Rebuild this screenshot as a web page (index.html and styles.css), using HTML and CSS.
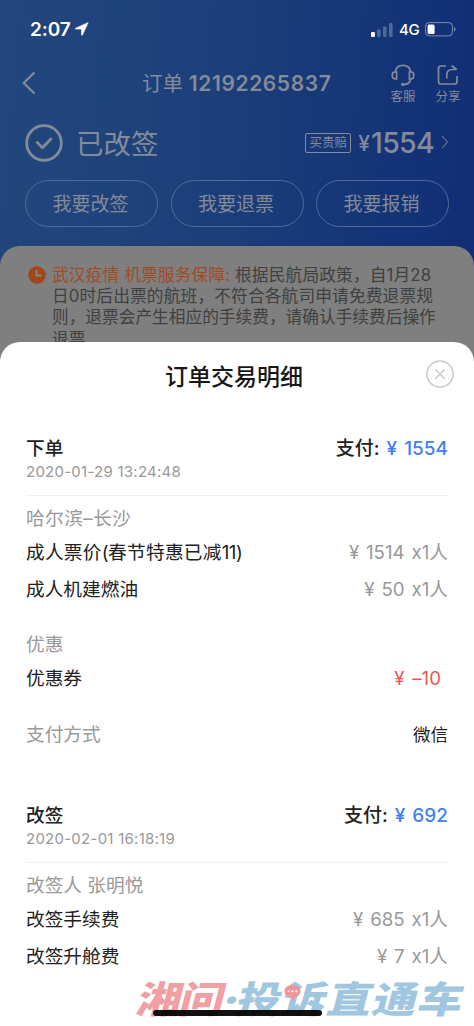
FILE: index.html
```html
<!DOCTYPE html>
<html lang="zh-CN">
<head>
<meta charset="utf-8">
<title>订单交易明细</title>
<link rel="stylesheet" href="styles.css">
</head>
<body>
<div class="phone">
  <header class="hero">
    <div class="status">
      <span class="time">2:07</span>
      <svg class="loc" width="14" height="14" viewBox="0 0 14 14"><path d="M13.200.6.6 6.200c-.6.3-.5.9.2.9h5.700v5.600c0 .7.700.8 1 .2z" fill="#fff" stroke="#fff" stroke-width=".6"/></svg>
      <svg class="signal" width="22" height="14" viewBox="0 0 22 14" fill="#fff"><rect y="9" width="4" height="5" rx="1"/><g opacity=".25"><rect x="6" y="6.500" width="3.600" height="7.500" rx="1"/><rect x="12" y="3.500" width="3.600" height="10.500" rx="1"/><rect x="18" width="3.600" height="14" rx="1"/></g></svg>
      <span class="net">4G</span>
      <svg class="battery" width="31" height="15" viewBox="0 0 31 15"><rect x=".6" y=".6" width="26.800" height="13.300" rx="3.600" fill="none" stroke="#fff" stroke-opacity=".45"/><rect x="2.600" y="2.500" width="7" height="9.500" rx="1.500" fill="#fff"/><path d="M29 5v4.500q1.500-.6 1.500-2.250T29 5" fill="#fff" opacity=".45"/></svg>
    </div>
    <nav class="nav">
      <svg class="back" width="14" height="24" viewBox="0 0 14 24"><path d="M12.500 1.500 1.700 12 12.500 22.500" fill="none" stroke="currentColor" stroke-width="2.200"/></svg>
      <h1 class="order">订单 <b>12192265837</b></h1>
      <div class="tool">
        <svg width="24" height="23" viewBox="0 0 24 23" fill="none" stroke="currentColor" stroke-width="1.700"><path d="M4.300 8C5 3.500 8 1.300 12 1.300S19 3.500 19.700 8M19.700 15c-.8 4-3.200 5.700-7.700 5.500"/><path d="M5.600 8v6.800H4Q1.200 14.800 1.200 11.400T4 8zM18.400 8v6.800H20q2.800 0 2.800-3.400T20 8z"/><path d="M11.500 20.500h1" stroke-width="2.800" stroke-linecap="round"/></svg>
        <span>客服</span>
      </div>
      <div class="tool">
        <svg width="22" height="23" viewBox="0 0 22 23" fill="none" stroke="currentColor" stroke-width="1.700"><path d="M9 2H4Q1.500 2 1.500 4.500v13Q1.500 20 4 20h13.500q2.500 0 2.500-2.500V12M9.800 14.500V11q0-5.500 5.500-5.500h4M14.500 1.500l5.300 4"/></svg>
        <span>分享</span>
      </div>
    </nav>
    <div class="state">
      <svg width="38" height="38" viewBox="0 0 38 38" fill="none" stroke="currentColor" stroke-width="2.800"><circle cx="19" cy="19" r="17.300"/><path d="m12.300 18.500 5.200 5.200 8.300-8.700" stroke-linecap="round" stroke-linejoin="round"/></svg>
      <span class="state-name">已改签</span>
      <span class="tag">买贵赔</span>
      <span class="yen">¥</span><span class="total">1554</span>
      <svg class="more" width="8" height="14" viewBox="0 0 8 14"><path d="m1 1 5.500 6L1 13" fill="none" stroke="currentColor"/></svg>
    </div>
    <div class="actions"><span>我要改签</span><span>我要退票</span><span>我要报销</span></div>
  </header>
  <section class="notice">
    <svg width="18" height="18" viewBox="0 0 18 18"><circle cx="9" cy="9" r="8.800" fill="#9f491b"/><path d="M8.500 4v5.500h5" fill="none" stroke="#8a8583" stroke-width="1.800"/></svg>
    <div class="notice-text">
      <p class="n1"><em>武汉疫情 机票服务保障:</em> 根据民航局政策，自1月28</p>
      <p class="n2">日0时后出票的航班，不符合各航司申请免费退票规</p>
      <p class="n3">则，退票会产生相应的手续费，请确认手续费后操作</p>
      <p>退票</p>
    </div>
  </section>
  <main class="sheet">
    <div class="sheet-head">
      <h2>订单交易明细</h2>
      <svg class="close" width="28" height="28" viewBox="0 0 28 28" fill="none" stroke="#c9c9c9" stroke-width="1.500"><circle cx="14" cy="14" r="13.100"/><path d="m9.300 9.300 9.400 9.400m0-9.400-9.400 9.400"/></svg>
    </div>
    <section class="record">
      <div class="row head"><span>下单</span><span class="pay">支付: <b>¥ 1554</b></span></div>
      <time class="date">2020-01-29 13:24:48</time>
      <div class="row label"><span class="route">哈尔滨–长沙</span></div>
      <div class="row"><span class="fare">成人票价<i>(</i>春节特惠已减<i>11)</i></span><span class="amount">¥ 1514 x1人</span></div>
      <div class="row last"><span>成人机建燃油</span><span class="amount">¥ 50 x1人</span></div>
      <div class="row label gap"><span>优惠</span></div>
      <div class="row"><span>优惠券</span><span class="minus">¥ –10</span></div>
      <div class="row label gap pay-way"><span>支付方式</span><span class="method">微信</span></div>
    </section>
    <section class="record second">
      <div class="row head"><span>改签</span><span class="pay">支付: <b>¥ 692</b></span></div>
      <time class="date">2020-02-01 16:18:19</time>
      <div class="row label"><span>改签人 张明悦</span></div>
      <div class="row"><span>改签手续费</span><span class="amount">¥ 685 x1人</span></div>
      <div class="row last"><span>改签升舱费</span><span class="amount">¥ 7 x1人</span></div>
    </section>
  </main>
  <div class="watermark"><span class="red">湘问</span><span class="dot">·</span><span class="blue">投诉直通车</span></div>
  <svg class="bubble" width="17" height="16" viewBox="0 0 17 16"><path d="M8.500 0C3.800 0 .5 2.600.5 6.300c0 3.500 3 5.600 6.500 6.100q1.500 1 .8 3.200c2-.6 2.700-1.700 3.500-3.300 3-.8 5.200-2.900 5.200-6C16.500 2.600 13.200 0 8.500 0" fill="#f0959a"/><g fill="#fff"><circle cx="4.700" cy="6.300" r="1"/><circle cx="8.500" cy="6.300" r="1"/><circle cx="12.300" cy="6.300" r="1"/></g></svg>
  <div class="home"></div>
</div>
</body>
</html>
```
FILE: styles.css
```css
* { box-sizing: border-box; }
body { margin: 0; font-family: Inter, "Noto Sans CJK SC", sans-serif; font-feature-settings: "calt" 0; color: #222; }
h1, h2, p { margin: 0; font-weight: 400; }
i, em { font-style: normal; }
.phone { position: relative; width: 474px; height: 1026px; overflow: hidden; background: linear-gradient(95deg, #22477c 0, #1c3f7a 45%, #102d75 100%) 0 0 / 474px 360px no-repeat; }
.hero { height: 246px; color: #838b98; }
.status { height: 58px; padding: 1px 18px 0 30px; display: flex; align-items: center; color: #fff; }
.time { font-size: 19px; font-weight: 600; width: 45px; letter-spacing: -.1px; }
.loc { margin-top: -1px; }
.signal { margin-left: auto; }
.net { font-size: 15px; font-weight: 500; margin: 0 6px 0 6px; width: 20px; letter-spacing: -.4px; }
.nav { height: 50px; padding: 0 12px 0 22px; display: flex; align-items: center; }
.order { font-size: 20.5px; margin-left: 106px; padding-top: 1px; line-height: 50px; white-space: pre; width: 239px; }
.order b { font-weight: 600; font-size: 21px; letter-spacing: .6px; }
.tool { width: 26px; margin-left: 9px; display: flex; flex-direction: column; align-items: center; font-size: 12.5px; line-height: 20px; white-space: nowrap; }
.tool + .tool { margin-left: 19px; }
.tool svg { margin-top: 4px; }
.state { height: 70px; padding: 0 25px; display: flex; align-items: center; }
.state-name { font-size: 27.500px; margin-left: 13px; margin-right: auto; margin-top: -3px; }
.tag { border: 1px solid currentColor; border-radius: 2px; width: 46px; height: 20px; font-size: 12.5px; line-height: 18px; text-align: center; }
.yen { font-size: 21px; margin: 1px 1px 0 7px; font-weight: 500; }
.total { font-size: 28.500px; font-weight: 500; letter-spacing: -.7px; margin-top: -2px; }
.more { margin-left: 7px; margin-right: 0; margin-top: -3px; }
.actions { display: grid; grid-template-columns: repeat(3, 133px); justify-content: space-between; padding: 2px 25px 0; }
.actions span { height: 47px; border: 1px solid #506c9b; border-radius: 24px; text-align: center; font-size: 19px; line-height: 47px; padding-right: 2px; }
.notice { height: 120px; background: #7f7f7f; border-radius: 20px 20px 0 0; padding: 19px 20px 0 28px; display: flex; gap: 6px; color: #404040; }
.notice svg { margin-top: 1px; flex: none; }
.notice-text { font-size: 16.7px; line-height: 21.200px; white-space: nowrap; }
.notice-text .n1 { letter-spacing: .15px; }
.notice-text .n2 { letter-spacing: .15px; }
.notice-text em { color: #9f4c25; }
.sheet { position: absolute; left: 0; right: 0; top: 342px; bottom: 0; background: #fff; border-radius: 20px 20px 0 0; padding: 0 26px; }
.sheet-head { height: 90px; padding: 18px 6px 0 0; display: flex; justify-content: center; align-items: flex-start; position: relative; }
.sheet-head h2 { font-size: 23px; line-height: 34px; color: #171717; font-weight: 500; }
.close { position: absolute; right: -6px; top: 18px; }
.row { display: flex; justify-content: space-between; height: 34px; line-height: 34px; font-size: 18.7px; white-space: nowrap; }
.row i { letter-spacing: -.5px; }
.fare { letter-spacing: .25px; }
.route { letter-spacing: .4px; }
.head { font-weight: 500; }
.pay { font-size: 19px; word-spacing: 2px; }
.pay b { color: #3f82ef; font-weight: 500; }
.date { display: block; height: 30px; border-bottom: 1px solid #f0f0f0; font-size: 15px; line-height: 11px; color: #999; letter-spacing: .25px; margin-bottom: 6px; }
.label { color: #999; }
.amount { color: #999; word-spacing: 1.6px; }
.last { margin-top: 3px; }
.gap { margin-top: 21px; }
.minus { color: #ed5656; margin-right: 7px; word-spacing: 2.500px; }
.method { color: #222; font-size: 17.5px; }
.pay-way { margin-top: 22px; }
.second { margin-top: 47px; }
.watermark { position: absolute; left: 132px; top: 976px; height: 48px; display: flex; font-size: 37px; line-height: 48px; font-weight: 900; transform-origin: 0 100%; transform: scaleX(1.2) skewX(-12deg); white-space: nowrap; }
.red { color: #f0a0a4; letter-spacing: -1.500px; }
.blue, .dot { color: #a0c7df; }
.blue { letter-spacing: .8px; }
.dot { width: 12px; text-align: center; }
.bubble { position: absolute; left: 284px; top: 985px; }
.home { position: absolute; left: 153px; top: 1010px; width: 169px; height: 6px; border-radius: 3px; background: #000e; }
```
